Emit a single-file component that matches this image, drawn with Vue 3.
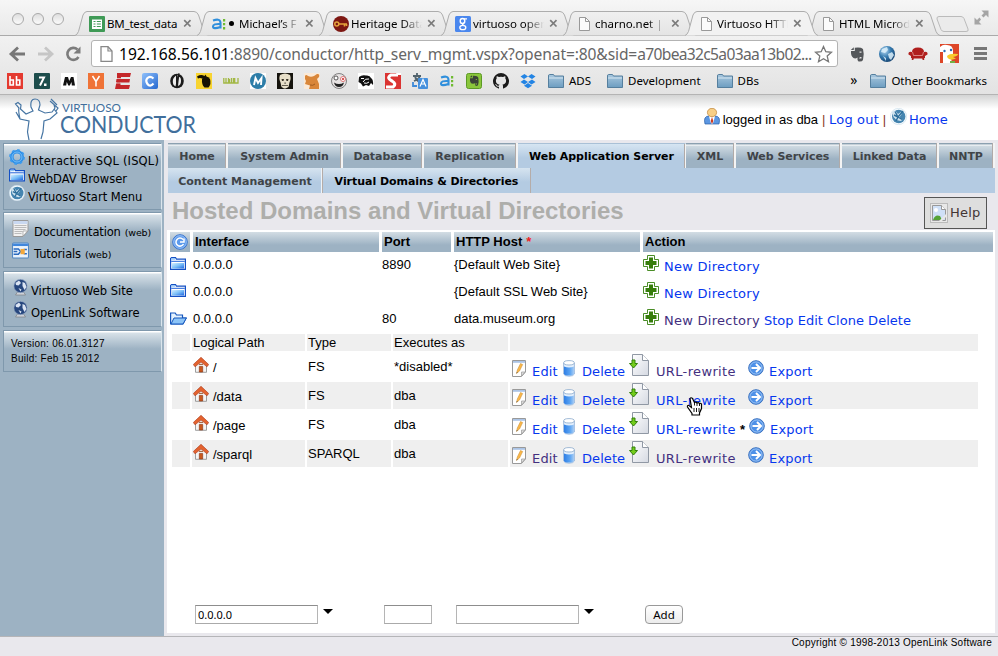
<script setup>
const tabs = [
  { icon: 'sheet', title: 'BM_test_data' },
  { icon: 'ai', title: '● Michael’s F', dot: true },
  { icon: 'key', title: 'Heritage Data' },
  { icon: 'google', title: 'virtuoso open' },
  { icon: 'doc', title: 'charno.net | c' },
  { icon: 'doc', title: 'Virtuoso HTTP', active: true },
  { icon: 'doc', title: 'HTML Microd' },
]
const marks = ['bb', 'slash', 'm', 'y', 'e', 'c', 'quill', 'fruit', 'wu', 'mm', 'skull', 'beast', 'face', 'hat', 's', 'trans', 'ai', 'evernote', 'github', 'dropbox']
const folders = ['ADS', 'Development', 'DBs']
const nav = [
  ['Home', 60], ['System Admin', 115], ['Database', 81], ['Replication', 94], ['Web Application Server', 168],
  ['XML', 50], ['Web Services', 106], ['Linked Data', 97], ['NNTP', 56],
]
const hosts = [
  { port: '8890', host: '{Default Web Site}' },
  { port: '', host: '{Default SSL Web Site}' },
  { port: '80', host: 'data.museum.org', open: true },
]
const paths = [
  { path: '/', type: 'FS', user: '*disabled*', rewriteSeen: true },
  { path: '/data', type: 'FS', user: 'dba' },
  { path: '/page', type: 'FS', user: 'dba', star: true },
  { path: '/sparql', type: 'SPARQL', user: 'dba', editSeen: true, rewriteSeen: true },
]
</script>

<template>
  <svg class="defs" width="0" height="0" aria-hidden="true">
    <defs>
      <linearGradient id="gFold" x1="0" y1="0" x2="0" y2="1"><stop offset="0" stop-color="#a9c8df" /><stop offset="1" stop-color="#6d9dc0" /></linearGradient>
      <linearGradient id="gBlue" x1="0" y1="0" x2="1" y2="1"><stop offset="0" stop-color="#8fc0fb" /><stop offset="1" stop-color="#2467cf" /></linearGradient>
      <linearGradient id="gFront" x1="0" y1="0" x2="1" y2="1"><stop offset="0" stop-color="#d4eeff" /><stop offset=".5" stop-color="#7cc0f8" /><stop offset="1" stop-color="#1e66e0" /></linearGradient>
      <linearGradient id="gDb" x1="0" y1="0" x2="1" y2="0"><stop offset="0" stop-color="#2f7fe6" /><stop offset=".6" stop-color="#5ba4f2" /><stop offset="1" stop-color="#a9cdf5" /></linearGradient>
      <linearGradient id="gPage" x1="0" y1="0" x2="1" y2="1"><stop offset="0" stop-color="#fff" /><stop offset="1" stop-color="#d5d9e2" /></linearGradient>
      <linearGradient id="gTab" x1="0" y1="0" x2="0" y2="1"><stop offset="0" stop-color="#f0f0f0" /><stop offset="1" stop-color="#e4e4e4" /></linearGradient>
      <radialGradient id="gGlobe" cx=".35" cy=".3" r=".8"><stop offset="0" stop-color="#b8dcf5" /><stop offset=".5" stop-color="#3479ae" /><stop offset="1" stop-color="#123c68" /></radialGradient>
    </defs>
    <symbol id="sheet" viewBox="0 0 16 16"><rect width="16" height="16" rx="1" fill="#3f9a56" /><path d="M3 3.500h10v9.500H3z" fill="#fff" /><path d="M4.500 5h2v1h-2zM4.500 7.500h2v1h-2zM4.500 10h2v1h-2zM7.800 5h4v1h-4zM7.800 7.500h4v1h-4zM7.800 10h4v1h-4z" fill="#3f9a56" /></symbol>
    <symbol id="ai" viewBox="0 0 16 16"><path d="M2 4.500Q9.500 2 9.500 7V12.500M9.500 8Q2 7.500 2 10.500T9.500 11" fill="none" stroke="#2f8fdc" stroke-width="2.100" /><path d="M12 3h2.200v2.500H12zM12 7h2.200v2.300H12zM12 11h2.200v2.500H12z" fill="#6fbb32" /></symbol>
    <symbol id="key" viewBox="0 0 16 16"><circle cx="8" cy="8" r="8" fill="#7d1712" /><path d="M5 8h9M11.500 8v2.500M13.500 8v2" stroke="#e5a33b" stroke-width="1.600" /><circle cx="3.800" cy="8" r="2" fill="none" stroke="#e5a33b" stroke-width="1.500" /></symbol>
    <symbol id="google" viewBox="0 0 16 16"><rect width="16" height="16" rx="1.500" fill="#4a87ee" /><ellipse cx="7.500" cy="5" rx="2.300" ry="2.500" fill="none" stroke="#fff" stroke-width="1.400" /><path d="M9 2.800h3M9 7Q6 8 9 9.500" fill="none" stroke="#fff" stroke-width="1.300" /><ellipse cx="7.800" cy="11.500" rx="3" ry="2.200" fill="none" stroke="#fff" stroke-width="1.300" /></symbol>
    <symbol id="doc" viewBox="0 0 16 16"><path d="M2.500 1.500h6l4 4v9h-10z" fill="#fbfbfb" stroke="#999" /><path d="M8.500 1.500v4h4" fill="none" stroke="#999" /></symbol>
    <symbol id="bb" viewBox="0 0 16 16"><rect width="16" height="16" fill="#e43a30" /><path d="M3 3v9h3.300V7H3M9.500 3v9h3.300V7H9.500" fill="none" stroke="#fff" stroke-width="1.600" /></symbol>
    <symbol id="slash" viewBox="0 0 16 16"><rect width="16" height="16" rx="1" fill="#1d4d4c" /><path d="M5 4.500h5L6 12.500" fill="none" stroke="#fff" stroke-width="2" /><path d="M10 10.500h2.500V13H10z" fill="#fff" /></symbol>
    <symbol id="m" viewBox="0 0 16 16"><rect width="16" height="16" fill="#fff" /><path d="M2 12.500 4 4h3l1.200 4L10 4h2.500L14 12.500h-3.200L10.500 9l-1.700 3.500H7.300L5.800 9l-.6 3.500z" fill="#111" /></symbol>
    <symbol id="y" viewBox="0 0 16 16"><rect width="16" height="16" fill="#ef7337" /><path d="m4.500 3 3.500 5.500L11.500 3M8 8v5.500" fill="none" stroke="#fff" stroke-width="1.500" /></symbol>
    <symbol id="e" viewBox="0 0 16 16"><path d="M2 0h14l-1 4H6v2h9l-.6 3.500H5.500V12H15l-1 4H0L1.500 9H1l.5-3H2z" fill="#c4272a" /><path d="M0 5.500h6M0 10h6" stroke="#eee" stroke-width=".700" /></symbol>
    <symbol id="c" viewBox="0 0 16 16"><rect width="16" height="16" rx="2" fill="url(#gBlue)" /><path d="M11.500 5.500Q8 2.500 5.500 5T5.500 11T11.500 10.500" fill="none" stroke="#fff" stroke-width="2.200" /></symbol>
    <symbol id="quill" viewBox="0 0 16 16"><ellipse cx="8" cy="8" rx="6.800" ry="7.300" fill="#1b1b1b" /><path d="M8.500 1.800Q4 4 3.800 8t2.700 5.500L7.500 8zM10 4l-1 9q3-1 3-5t-2-4" fill="#eee" /><path d="M10 0 7 15M7.500 2v11" stroke="#1b1b1b" /></symbol>
    <symbol id="fruit" viewBox="0 0 16 16"><rect width="16" height="16" fill="#f8d431" /><path d="M6 6q4-2 8 0 1.500 5-1.500 8.500h-4Q5.500 12 6 6" fill="#171303" /><path d="M1 3.500q4-2.500 7.500-.5l1-1.500 1 2 3.500 1.500-2 1.500-5-.5q-3-1.500-5-.5z" fill="#171303" /></symbol>
    <symbol id="wu" viewBox="0 0 16 16"><path d="M.8 5v5h4.700V5M3 5v5M6.500 6v4h4V5M8.500 5v5M11 10h4V5M11.700 5v5" fill="none" stroke="#a2b844" stroke-width="1.300" /></symbol>
    <symbol id="mm" viewBox="0 0 16 16"><rect width="16" height="16" fill="#fff" /><circle cx="8" cy="8" r="8" fill="#2d7da8" /><path d="M4 12 5.500 5l2.500 5 3.500-5-.5 7" fill="none" stroke="#fff" stroke-width="1.900" /></symbol>
    <symbol id="skull" viewBox="0 0 16 16"><rect width="16" height="16" fill="#15130d" /><path d="M3 2q5-3 10 0 1.500 4-.5 7.500L11.500 14l-3 1.500H7L4.500 14l-1-4.500Q1.500 6 3 2" fill="#e6dec8" /><path d="M4.500 6H7L6.500 8H5zM9 6h2.500L11 8H9.500zM7.500 9.500h1.200v1.200H7.500zM5 12h6v.800H5z" fill="#3a3428" /></symbol>
    <symbol id="beast" viewBox="0 0 16 16"><rect width="16" height="16" fill="#fbe9d6" /><path d="M1 3q1-2 3 0 3 1.500 6 0l3-2q3-.5 2 3l-2 2 2 5v5H5l1-3.500-5-1.500L2 8 1 6z" fill="#d98639" /><path d="M6 12q3 1 5-1" stroke="#a05c20" fill="none" /></symbol>
    <symbol id="face" viewBox="0 0 16 16"><circle cx="8" cy="8" r="7.500" fill="#e7e3e3" stroke="#666" stroke-width=".8" /><circle cx="5" cy="5" r="2" fill="#fff" stroke="#333" stroke-width=".8" /><circle cx="12" cy="6" r="2.500" fill="#fff" stroke="#d77" /><circle cx="12" cy="6" r="1" fill="#c22" /><path d="M3 9.500q5 3 10 0-1 4.500-5 4.500t-5-4.500" fill="#222" /></symbol>
    <symbol id="hat" viewBox="0 0 16 16"><rect width="16" height="16" fill="#fff" /><path d="M1 4q3-2.500 7-1.500 4-.5 5 2.500 2.500 1.500 2 7l-2-2-2 3-3-1-3 1.500-2-3L.500 9z" fill="#111" /><path d="M3 5.500h3M5 9q2-4 6-3M6 10q3 1 5-1" stroke="#fff" fill="none" stroke-width="1" /></symbol>
    <symbol id="s" viewBox="0 0 16 16"><rect width="16" height="16" fill="#db3432" /><path d="M13 2H6Q1 5 7 8q5 3 1 6H1" fill="none" stroke="#fff" stroke-width="3.200" /><path d="M11 0h5v2h-4z" fill="#fff" /></symbol>
    <symbol id="trans" viewBox="0 0 16 16"><path d="M1 3h8M5 0v3M2 8q5-2 6-5M3 4q2 4 5 5" stroke="#52636d" stroke-width="1.800" fill="none" /><rect x="6" y="5" width="10" height="11" rx="1" fill="#4590dd" /><path d="m8 13.500 3-7 3 7M9 11h4" fill="none" stroke="#fff" stroke-width="1.200" /><path d="M1 9v4h4" fill="none" stroke="#3c89d8" stroke-width="1.800" /></symbol>
    <symbol id="evernote" viewBox="0 0 16 16"><rect x=".5" y=".5" width="15" height="15" rx="2" fill="#8ac63c" stroke="#5c9a25" /><path d="M4 5.200h2.800V2.800q5-.3 5.500 2 .8 4-.3 7.500-2.500 1.500-3-.5v-1.500q-2 .7-4 0Q3.500 8.500 4 5.200" fill="#3b4438" /><path d="m3.800 4.300 2.200-2.100v2.100z" fill="#3b4438" /><path d="M9.800 6h1v1h-1zM9.500 10.500h1.500v1H9.500z" fill="#8ac63c" /></symbol>
    <symbol id="elephant" viewBox="0 0 16 16"><path d="M2 5h3.800V1.800q6-.8 8.200 1.200 1.500 5 0 11-1 2-4.500 1.500-1.500-1-1-4-2 1.500-4 .5Q1.500 10 2 5M1.800 4l3-2.800V4z" fill="#54575a" /><path d="M10.500 5.500h2v1.200h-2zM10 12.500h2.500v-1.500H11z" fill="#e0e0e0" /></symbol>
    <symbol id="github" viewBox="0 0 16 16"><path d="M8 0a8 8 0 0 0-2.500 15.600c.4.100.5-.2.500-.400v-1.500c-2.200.5-2.700-.9-2.700-.9-.4-.9-.9-1.200-.9-1.200-.7-.5.1-.5.1-.5.800.1 1.200.8 1.200.8.7 1.200 1.900.9 2.300.7.1-.5.300-.9.500-1.100-1.800-.2-3.600-.9-3.600-4 0-.9.300-1.600.8-2.100 0-.3-.4-1.100.1-2.200 0 0 .7-.2 2.200.8a7.500 7.500 0 0 1 4 0c1.500-1 2.200-.8 2.200-.8.400 1.100.1 1.900.1 2.200.5.500.8 1.200.8 2.100 0 3.100-1.900 3.800-3.700 4 .3.300.6.800.6 1.500v2.200c0 .2.100.5.500.4A8 8 0 0 0 8 0" fill="#1b1b1b" /></symbol>
    <symbol id="dropbox" viewBox="0 0 16 16"><path d="m4.500 1 3.500 2.500L4 6 .500 3.500zM11.500 1 8 3.500 12 6l3.500-2.500zM4 6.500 8 9l-3.500 2.500L.500 9zM12 6.500 8 9l3.500 2.500L15.500 9zM8 10l4 2.800-4 2.500-4-2.500z" fill="#2384e4" /></symbol>
    <symbol id="folder" viewBox="0 0 16 14"><path d="M.5 13.500V2q0-1.500 1-1.500h4l1 1.500h9v11.500z" fill="url(#gFold)" stroke="#557f9e" /><path d="M1 4h14" stroke="#d6e7f2" /></symbol>
    <symbol id="globe" viewBox="0 0 16 16"><circle cx="8" cy="8" r="8" fill="url(#gGlobe)" /><path d="m3 3 5-2 1 3-3 3-4-1zM9 8l4-2 2 3-3 5-2-2zM4 10l3 2v3z" fill="#dcf0fa" opacity=".85" /></symbol>
    <symbol id="couch" viewBox="0 0 20 16"><path d="M4 6q0-4.500 6-4.500T16 6q4-1 3.500 2.500L17 10v2h-.8v2h-1.500l-.5-1.500H5.800L5.300 14H3.800v-2H3v-2L.500 8.500Q0 5 4 6" fill="#b01f1d" /><path d="M4.500 6l1 3.500h9l1-3.500" fill="none" stroke="#e6a09c" stroke-width=".8" /></symbol>
    <symbol id="duck" viewBox="0 0 19 19"><rect width="19" height="19" fill="#dd4628" /><path d="M0 3q3-3 7-2 6 0 6 6v4l-2 3 1 5H3V8H0z" fill="#fff" /><circle cx="4.500" cy="7" r="1.200" fill="#2b6bb5" /><circle cx="11" cy="6" r="1.200" fill="#2b6bb5" /><path d="M7 12q3-3 11-2 0 2-5 3l3 1.500q-4 2-7 .5-2-1-2-3" fill="#f8ca2d" /><path d="M10 17h5v2h-5z" fill="#74b043" /></symbol>
    <symbol id="gear" viewBox="0 0 16 16"><circle cx="8" cy="8" r="5.200" fill="none" stroke="#2f8fe6" stroke-width="3.600" /><circle cx="8" cy="8" r="7" fill="none" stroke="#3c9bee" stroke-width="1.800" stroke-dasharray="2.700 2.800" /><circle cx="8" cy="8" r="5" fill="none" stroke="#74bdf8" /></symbol>
    <symbol id="wfold" viewBox="0 0 16 13"><path d="M.600 12.400V1.500l1-.9h3.900l1 1.500h8.900v10.300z" fill="#fff" stroke="#1450c4" stroke-width="1.200" /><path d="M1.200 1.200h4v1.500h-4z" fill="#8cc3f8" /><path d="M1.200 3.800h13.600v1H1.200z" fill="#1c5fd8" /><path d="M2 6h12v5.500H2z" fill="url(#gFront)" /></symbol>
    <symbol id="wopen" viewBox="0 0 17 13"><path d="M.600 12V1h4.600l1.300 2h6v3H16L13 12z" fill="#e4f2fe" stroke="#1556bd" stroke-width="1.200" /><path d="M4 6h12.400L13 12H1z" fill="#8cc4f7" stroke="#1556bd" /></symbol>
    <symbol id="start" viewBox="0 0 17 17"><circle cx="8.500" cy="8.500" r="8.200" fill="#f5fafd" stroke="#c9dde9" stroke-width=".6" /><circle cx="8.700" cy="8.500" r="6.700" fill="#4585b0" /><path d="m2 4 3-1.500 3 3.500 3-2 .5 2.500-2 2.500 3 3-2 1-4-1-3-3z" fill="#cfe3ef" /><path d="M5 3.500 8 9l5-6M8 9l4 2.500M4 7l4 2-2 4" fill="none" stroke="#2d6f9c" stroke-width="1.400" /></symbol>
    <symbol id="docs" viewBox="0 0 16 17"><path d="M.5.500h15V11l-5 5.500H.500z" fill="#f1f1f1" stroke="#999" /><path d="M1 1h14v3H1z" fill="#c9d8f0" /><path d="M2 5.500h12M2 7.500h12M2 9.500h11M2 11.500h8M2 13.500h7" stroke="#bbb" /><path d="M10.500 16V11H15z" fill="#fff" stroke="#999" stroke-width=".7" /></symbol>
    <symbol id="tut" viewBox="0 0 16 15"><rect x=".5" y=".5" width="15" height="14" rx="1" fill="#eaf3fc" stroke="#4f86c2" /><path d="M1 1h14v2.300H1z" fill="#3f86dc" /><path d="M1.500 6h4.500l2 2.500-2 2.500H1.500M5 8.500H1.500M11 6.500h3M11 10.500h3" fill="none" stroke="#2a6abf" stroke-width="1.400" /><path d="M8 6h4v5H8z" fill="#f3a83c" /></symbol>
    <symbol id="web" viewBox="0 0 14 17"><path d="M4 13h6l2 3H2z" fill="#ccd1d9" stroke="#777" stroke-width=".6" /><circle cx="7" cy="7" r="6.700" fill="#27477e" stroke="#9fb2cc" stroke-width=".7" /><path d="m2 4 3.500-2.500L7.500 4 5 6.500 2.500 6zM9 3l2.500 1L13 8l-2 3-2-4zM5 9l3 1.500-1 2z" fill="#dbe4f2" /></symbol>
    <symbol id="user" viewBox="0 0 16 17"><path d="M1 16q-2-8 4-8h6q6 0 4 8z" fill="#5c97e2" stroke="#2a5ea8" stroke-width=".7" /><path d="M5 8h6l-1.500 6L8 16.300 6.500 14z" fill="#fff" /><path d="m8 9 1.300 4L8 16l-1.300-3z" fill="#ce3a20" /><ellipse cx="8" cy="4.500" rx="4.600" ry="4.200" fill="#f8cf86" stroke="#bb8135" stroke-width=".7" /></symbol>
    <symbol id="refresh" viewBox="0 0 16 16"><circle cx="8" cy="8" r="7.300" fill="#5c9aec" stroke="#3a74cd" /><circle cx="8" cy="8" r="6.300" fill="none" stroke="#a5c8f6" stroke-width=".8" /><path d="M11 5.500A4 4 0 1 0 11.500 10M8 8h4V4.500" fill="none" stroke="#fff" stroke-width="1.500" /></symbol>
    <symbol id="plus" viewBox="0 0 16 16"><path d="M4.500.500h7v4h4v7h-4v4h-7v-4h-4v-7h4z" fill="#fff" stroke="#4a8d26" /><path d="M6 2.500h4V6h3.500v4H10v3.500H6V10H2.500V6H6z" fill="#377d0c" /></symbol>
    <symbol id="house" viewBox="0 0 16 16"><path d="M2.500 8v7.300h11V8L8 3z" fill="#f5f5f5" stroke="#888" stroke-width=".8" /><path d="M6.300 9.500h3.400V15H6.300z" fill="#c9571c" stroke="#873313" stroke-width=".6" /><path d="m8 .3 7.700 7.200-1.700 2.300L8 5 2 9.800.300 7.500z" fill="#e3632f" stroke="#a9371b" stroke-width=".6" /><path d="M6 6.800h4v1.300H6z" fill="#a36b4b" /></symbol>
    <symbol id="note" viewBox="0 0 14 17"><path d="M.5.500h13V12l-4 4.500h-9z" fill="#fff" stroke="#999" /><path d="M1 1h12v1.800H1z" fill="#abc4e6" /><path d="m4.500 13.500.8-3.500 3.200-6.500 2.200 1L7.500 11z" fill="#fbb748" stroke="#c38a35" stroke-width=".5" /><path d="m4.500 13.500.3-1.500.9.500z" fill="#444" /><path d="M9.500 16v-4H13z" fill="#ddd" stroke="#999" stroke-width=".7" /></symbol>
    <symbol id="db" viewBox="0 0 12 17"><path d="M.6 3v11q1 2.200 5.400 2.200T11.400 14V3z" fill="#e3effc" stroke="#8faed6" stroke-width=".8" /><path d="M1 6.500q5 1.800 10 0V14q-1 1.600-5 1.600T1 14z" fill="url(#gDb)" /><ellipse cx="6" cy="2.800" rx="5.300" ry="2.200" fill="#fff" stroke="#8aaacc" stroke-width=".8" /></symbol>
    <symbol id="rewrite" viewBox="0 0 20 22"><path d="M3.500.500h10l6 6v15h-16z" fill="url(#gPage)" stroke="#9098a4" /><path d="M13.500.500v6h6" fill="#fff" stroke="#9098a4" /><path d="M3 6h3v3.500h2.500L4.500 14 .500 9.500H3z" fill="#74cd1b" stroke="#33800c" /></symbol>
    <symbol id="export" viewBox="0 0 16 16"><circle cx="8" cy="8" r="7.300" fill="#4e91e8" stroke="#3e73bf" /><circle cx="8" cy="8" r="6.100" fill="none" stroke="#a9cbf5" stroke-width=".8" /><path d="M3.500 8h8M8 4l4 4-4 4" fill="none" stroke="#fff" stroke-width="2" /></symbol>
    <symbol id="broken" viewBox="0 0 18 20"><rect x=".5" y=".5" width="17" height="19" fill="#e8e8e8" stroke="#bbb" /><path d="M2.500 2.500h9l4 4v11h-13z" fill="#cfe0f7" stroke="#999" /><path d="M11.500 2.500v4h4" fill="#fff" stroke="#999" /><circle cx="6" cy="7" r="2" fill="#fff" /><path d="M3 17q2-6 7-4l2 4z" fill="#55a336" /><path d="m9 18 7-7v3l-4 4z" fill="#e8e8e8" /></symbol>
  </svg>

  <div class="window">
    <header class="chrome">
      <div class="strip">
        <div class="lights"><i /><i /><i /></div>
        <div v-for="t in tabs" :key="t.title" class="tab" :class="{ active: t.active }">
          <svg class="shape" width="136" height="25" viewBox="0 0 136 25">
            <path class="fill" d="M0 24.500Q2 24 3.500 20.500L8 4Q9.500.500 12 .500H119Q122 .500 123.500 4L129 20.500Q130.500 24 133 24.500" />
          </svg>
          <svg class="fav"><use :href="'#' + t.icon" /></svg>
          <span class="ttl"><template v-if="t.dot"><b class="bullet" />Michael’s F</template><template v-else>{{ t.title }}</template></span>
          <svg class="close" width="9" height="9" viewBox="0 0 9 9"><path d="m1.200 1.200 6.300 6.300M7.500 1.200 1.200 7.500" stroke="#7b7b7b" stroke-width="1.700" /></svg>
        </div>
        <svg class="newtab" width="34" height="17" viewBox="0 0 34 17"><path d="M3 .500H25Q27 .500 28 2.500L32 13Q33 15.500 30 15.500H8Q6 15.500 5 13.500L1 3Q.500.500 3 .500" fill="#ebebeb" stroke="#bbb" /></svg>
        <svg class="full" width="15" height="15" viewBox="0 0 15 15"><path d="M7.500.500H14.500V7.500L12 5 9.500 7.500 7.500 5.500 10 3zM.500 7.500V14.500H7.500L5 12 7 9.500 5.500 7.500 3 10z" fill="#a5a5a5" /></svg>
      </div>
      <div class="toolbar">
        <svg width="84" height="20" viewBox="0 0 84 20" class="navs">
          <path d="M19 10H6M12 3.500 5 10l7 6.500" fill="none" stroke="#777" stroke-width="2.800" />
          <path d="M32 10H45M39 3.500 46 10l-7 6.500" fill="none" stroke="#c6c6c6" stroke-width="2.800" />
          <path d="M71.500 5.500A6 6 0 1 0 72.500 13" fill="none" stroke="#7c7c7c" stroke-width="2.600" /><path d="M74.500 2.500V9.500H67.500z" fill="#7c7c7c" />
        </svg>
        <div class="url">
          <svg class="pageicon" width="13" height="16" viewBox="0 0 13 16"><path d="M1 .700h7l4 4.300v10.300H1z" fill="#fff" stroke="#888" stroke-width="1.300" /><path d="M8 .700V5h4" fill="none" stroke="#888" stroke-width="1.200" /></svg>
          <span class="addr"><b>192.168.56.101</b>:8890/conductor/http_serv_mgmt.vspx?openat=:80&amp;sid=<span class="sid">a70bea32c5a03aa13b02...</span></span>
          <svg class="star" width="19" height="18" viewBox="0 0 19 18"><path d="m9.500 1.500 2.300 5.200 5.700.6-4.300 3.800 1.300 5.600-5-3-5 3 1.300-5.600L1.500 7.300l5.700-.6z" fill="#fff" stroke="#777" stroke-width="1.300" /></svg>
        </div>
        <svg class="ext e1"><use href="#elephant" /></svg>
        <svg class="ext e2"><use href="#globe" /></svg>
        <svg class="ext e3"><use href="#couch" /></svg>
        <svg class="ext e4"><use href="#duck" /></svg>
        <div class="burger"><i /><i /><i /></div>
      </div>
      <div class="bookmarks">
        <svg v-for="m in marks" :key="m" class="bm"><use :href="'#' + m" /></svg>
        <div v-for="f in folders" :key="f" class="fold"><svg><use href="#folder" /></svg><span>{{ f }}</span></div>
        <span class="more">»</span>
        <div class="fold other"><svg><use href="#folder" /></svg><span>Other Bookmarks</span></div>
      </div>
    </header>

    <div class="banner">
      <svg class="logo" width="200" height="44" viewBox="0 0 200 44">
        <path d="M29 44 27.500 36 29 25 20 23 16 16M20 23Q18 14 19 12L15.500 8 18 6.500 21 9 20.500 13 26 18 33 15 31 11Q30 3 35 3T40 9L38.500 14 45 17 52 16 55 12 54 9M50 5 58 12 56 15M51 3 57 9M54 13 57 17 50 23 44 25 43 36 41 43" fill="none" stroke="#4675a3" stroke-width="1.200" />
        <text x="62" y="16" textLength="59" lengthAdjust="spacingAndGlyphs" class="l1">VIRTUOSO</text>
        <text x="60" y="36.500" textLength="136" lengthAdjust="spacingAndGlyphs" class="l2">CONDUCTOR</text>
      </svg>
      <div class="login">
        <svg class="usericon"><use href="#user" /></svg><span class="who">logged in as dba</span><span class="bar">|</span><a>Log out</a><span class="bar">|</span><svg class="homeicon"><use href="#start" /></svg><a>Home</a>
      </div>
    </div>

    <div class="body">
      <aside>
        <section class="b1">
          <p class="wide"><svg><use href="#gear" /></svg>Interactive SQL (ISQL)</p>
          <p><svg><use href="#wfold" /></svg>WebDAV Browser</p>
          <p><svg><use href="#start" /></svg>Virtuoso Start Menu</p>
        </section>
        <section class="b2">
          <p><svg><use href="#docs" /></svg>Documentation <small>(web)</small></p>
          <p><svg><use href="#tut" /></svg>Tutorials <small>(web)</small></p>
        </section>
        <section class="b3">
          <p><svg><use href="#web" /></svg>Virtuoso Web Site</p>
          <p><svg><use href="#web" /></svg>OpenLink Software</p>
        </section>
        <section class="b4">
          <p>Version: 06.01.3127</p>
          <p>Build: Feb 15 2012</p>
        </section>
      </aside>
      <main>
        <nav class="tabs">
          <a v-for="n in nav" :key="n[0]" :class="{ on: n[1] === 168 }" :style="{ width: n[1] + 'px' }">{{ n[0] }}</a>
        </nav>
        <nav class="sub"><a class="s1">Content Management</a><a class="s2">Virtual Domains &amp; Directories</a></nav>
        <div class="title"><h1>Hosted Domains and Virtual Directories</h1><button class="help"><svg width="18" height="20"><use href="#broken" /></svg>Help</button></div>
        <div class="panel">
          <div class="grid head">
            <span class="ref"><svg><use href="#refresh" /></svg></span><span>Interface</span><span>Port</span><span>HTTP Host <em>*</em></span><span>Action</span>
          </div>
          <div class="hosts">
            <div v-for="h in hosts" :key="h.host" class="grid host">
              <svg :class="{ open: h.open }"><use :href="h.open ? '#wopen' : '#wfold'" /></svg>
              <span>0.0.0.0</span><span>{{ h.port }}</span><span>{{ h.host }}</span>
              <div class="act"><svg><use href="#plus" /></svg><a class="new" :class="{ seen: h.open }">New Directory</a><template v-if="h.open"><a>Stop</a><a>Edit</a><a>Clone</a><a>Delete</a></template></div>
            </div>
          </div>
          <div class="inner">
            <div class="row top"><span /><span>Logical Path</span><span>Type</span><span>Executes as</span><span /></div>
            <div v-for="p in paths" :key="p.path" class="row">
              <span /><span class="path"><svg><use href="#house" /></svg>{{ p.path }}</span><span>{{ p.type }}</span><span>{{ p.user }}</span>
              <div class="ops">
                <svg class="i-note"><use href="#note" /></svg><a class="a-edit" :class="{ seen: p.editSeen }">Edit</a>
                <svg class="i-db"><use href="#db" /></svg><a class="a-del">Delete</a>
                <svg class="i-rw"><use href="#rewrite" /></svg><a class="a-rw" :class="{ seen: p.rewriteSeen }">URL-rewrite</a>
                <span class="gap" :class="{ wide: p.star }">{{ p.star ? '*' : '' }}</span>
                <svg class="i-ex"><use href="#export" /></svg><a>Export</a>
              </div>
            </div>
          </div>
          <div class="form">
            <input class="f1" value="0.0.0.0"><i class="caret" /><input class="f2"><input class="f3"><i class="caret" /><button>Add</button>
          </div>
        </div>
      </main>
    </div>
    <footer>Copyright © 1998-2013 OpenLink Software</footer>
    <svg class="cursor" width="17" height="19" viewBox="0 0 17 19"><path d="M5.500 10.500 3 8.500Q1 8 1.500 10L6 16.500V18H13.500V16L15.500 11.500V7Q14.500 5.500 13.500 7 13 5 11 6 10 4.500 8.500 5.500L6.500 1.500Q5 0 4 1.500z" fill="#fff" stroke="#000" stroke-width="1.200" /><path d="M8 11v4M10.500 11v4M13 11v4M8.500 5.500v3M11 6v3M13.500 7v2" stroke="#000" stroke-width=".9" /></svg>
  </div>
</template>

<style>
body { margin: 0; background: #e9e8ed; overflow: hidden; }
</style>

<style scoped>
* { box-sizing: border-box; }
p, h1 { margin: 0; }
svg { display: block; flex: none; }
.defs { position: absolute; }
.window { width: 998px; height: 656px; font: 13px "Liberation Sans", sans-serif; color: #000; position: relative; overflow: hidden; display: flex; flex-direction: column; }
.chrome { height: 95px; flex: none; border-bottom: 1px solid #b4b4b4; background: linear-gradient(#f6f6f6, #e9e9e9 35px, #f1f1f1 36px, #e3e3e3); font-family: "Noto Sans", sans-serif; }
.strip { height: 36px; padding-top: 11px; display: flex; position: relative; box-shadow: inset 0 -1px #aaa; }
.lights { width: 75px; display: flex; gap: 8px; padding: 2px 0 0 12px; flex: none; }
.lights i { width: 12px; height: 12px; border-radius: 50%; border: 1px solid #a9a9a9; background: linear-gradient(#dedede, #fbfbfb); }
.tab { width: 122px; height: 25px; flex: none; display: flex; position: relative; padding-left: 14px; align-items: center; }
.tab .shape { position: absolute; left: 0; top: 0; }
.tab .fill { fill: url(#gTab); stroke: #adadad; }
.tab.active { z-index: 2; }
.tab.active .fill { fill: #f2f2f2; }
.fav { width: 16px; height: 16px; position: relative; }
.ttl { position: relative; margin-left: 2px; width: 72px; overflow: hidden; white-space: nowrap; font-size: 11.5px; letter-spacing: -0.05px; line-height: 18px; -webkit-mask: linear-gradient(90deg, #000 52px, transparent 71px); }
.tab:nth-child(2) .ttl { -webkit-mask: none; letter-spacing: -0.2px; }
.bullet { display: inline-block; width: 5px; height: 5px; border-radius: 50%; background: #000; margin: 0 5px 2px 0; }
.close { margin-left: 4px; position: relative; }
.newtab { margin: 5px 0 0 7px; }
.full { position: absolute; left: 974px; top: 10px; }
.toolbar { height: 35px; display: flex; align-items: center; position: relative; padding-left: 6px; }
.navs { margin-right: 1px; }
.url { width: 747px; height: 27px; border: 1px solid #b3b3b3; border-radius: 3px; background: #fff; display: flex; align-items: center; }
.pageicon { margin-left: 8px; }
.addr { width: 697px; flex: none; white-space: nowrap; font-size: 15.6px; letter-spacing: -.12px; margin-left: 6px; color: #666; }
.addr b { font-weight: 400; letter-spacing: 0; color: #000; }
.addr .sid { letter-spacing: -.68px; }
.star { margin-left: -2px; }
.ext { width: 16px; height: 16px; }
.e1 { margin-left: 11px; }
.e2 { margin-left: 14px; }
.e3 { width: 20px; margin-left: 13px; }
.e4 { width: 19px; height: 19px; margin-left: 12px; }
.burger { display: flex; flex-direction: column; gap: 2px; margin-left: 15px; }
.burger i { width: 13px; height: 3px; background: #777; }
.bookmarks { height: 20px; display: flex; align-items: center; padding-left: 7px; }
.bm { width: 16px; height: 16px; margin-right: 11px; }
.fold { display: flex; align-items: center; font-size: 11.5px; line-height: 14px; white-space: nowrap; }
.fold svg { width: 16px; height: 14px; margin-left: 1px; }
.fold span { margin: -1px 15px 0 5px; }
.more { margin: 0 12px 3px auto; font-size: 14px; }
.fold.other span { margin-right: 11px; }
.banner { height: 45px; flex: none; background: linear-gradient(#d3d4d4, #fff 14px); display: flex; justify-content: space-between; }
.logo { margin-top: 1px; }
.l1 { font: 11.500px Lato, sans-serif; fill: #416f9c; }
.l2 { font: 24px Lato, sans-serif; fill: #416f9c; }
.login { display: flex; align-items: center; padding: 4px 50px 0 0; height: 45px; }
.login svg { margin-bottom: 7px; }
.usericon { width: 16px; height: 17px; margin-right: 3px; }
.homeicon { width: 17px; height: 17px; margin: 0 2px 0 0; }
.bar { width: 11px; text-align: center; color: #8a3520; }
a { font: 13px "DejaVu Sans", sans-serif; letter-spacing: .17px; color: #0637ee; white-space: nowrap; }
a.seen { color: #43307f; }
.body { height: 496px; flex: none; display: flex; }
aside { width: 164px; background: #9db2c3; padding: 3px 2px 0 3px; display: flex; flex-direction: column; gap: 3px; flex: none; }
section { border: 1px solid #7f98ac; border-right-color: #dbe5ec; background: linear-gradient(#fff 1px, #d7e1e8 2px, #9db2c3 18px); font: 11.5px "DejaVu Sans", sans-serif; letter-spacing: 0; white-space: nowrap; }
section p { display: flex; align-items: center; }
.b1 { height: 67px; padding: 8px 0 0 5px; }
.b1 p { height: 18px; }
.b1 p.wide { letter-spacing: .18px; }
.b1 p svg { width: 16px; height: 16px; margin: -8px 3px 0 0; }
.b2 { height: 56px; padding: 8px 0 0 8px; margin-top: -1px; }
.b2 p { height: 22px; letter-spacing: -.15px; }
.b2 p svg { width: 17px; height: 17px; margin: -7px 5px 0 0; }
.b2 small { font-size: 9.500px; margin-left: 4px; padding-top: 1px; }
.b3 { height: 56px; padding: 8px 0 0 9px; }
.b3 p { height: 22px; }
.b3 p svg { width: 15px; height: 17px; margin: -7px 3px 0 0; }
.b4 { height: 42px; padding: 5px 0 0 7px; font: 10px "Liberation Sans", sans-serif; letter-spacing: .25px; }
.b4 p { height: 15px; }
main { padding: 3px; width: 834px; background: #e9e8ed; }
.tabs { height: 25px; display: flex; padding-left: 1px; }
.tabs a, .sub a { font: bold 11px "DejaVu Sans", sans-serif; letter-spacing: -.04px; color: #3f4448; text-align: center; }
.tabs a { line-height: 27px; background: linear-gradient(#8ba0b0 1px, #fff 2px, #cfdae2 3px, #9db2c3 16px); border-right: 2px solid #f4f4f4; box-shadow: inset -1px 0 #b0aaa8; }
.tabs a.on { line-height: 25px; background: linear-gradient(#d6e5f2, #b4cbe2 14px); color: #000; border-top: 1px solid #a9c0d6; border-right-width: 1px; }
.sub { height: 25px; display: flex; background: #b4cbe2; margin: 0 0 0 1px; }
.sub a { line-height: 27px; background: linear-gradient(#d6e4f0, #b4cbe2 14px); border-right: 1px solid #b5aca8; box-shadow: inset -1px 0 #eef3f8; }
.sub .s1 { width: 155px; }
.sub .s2 { width: 208px; color: #000; box-shadow: none; }
.title { height: 37px; display: flex; justify-content: space-between; padding: 4px 8px 0 5px; }
h1 { font: bold 24px/27px "Liberation Sans", sans-serif; color: #aeaeab; }
.help { width: 63px; height: 32px; border: 1px solid #555; background: #dedede; padding: 0 0 1px 5px; display: flex; align-items: center; gap: 2px; font: 13px "DejaVu Sans", sans-serif; letter-spacing: .2px; color: #423535; }
.panel { height: 403px; background: #fff; padding: 2px 2px 0 3px; display: flex; flex-direction: column; }
.grid { display: grid; grid-template-columns: 20px 186px 69px 186px 350px; column-gap: 3px; }
.head { height: 20px; font-weight: bold; }
.head > span { background: linear-gradient(#d3dde4, #9db2c3 13px); line-height: 20px; padding-left: 2px; }
.head .ref { padding: 2px; }
.ref svg { width: 16px; height: 16px; }
em { color: #e22; }
.hosts { margin: -1px 0 1px; }
.host { height: 27px; align-items: center; }
.host > svg { width: 16px; height: 13px; margin-bottom: 2px; }
.host > svg.open { width: 17px; margin-bottom: 0; }
.act { display: flex; gap: 5px; align-items: center; }
.act svg { width: 16px; height: 16px; margin-bottom: 3px; }
.act a { padding-top: 3px; letter-spacing: .04px; }
.act a.new { letter-spacing: .27px; }
.act a + a { margin-left: -1px; }
.inner { padding: 1px 0 0 2px; display: grid; row-gap: 2px; }
.row { display: grid; grid-template-columns: 18px 113px 84px 115px 468px; column-gap: 2px; height: 27px; }
.row > span { padding: 6px 0 0 1px; line-height: 15px; }
.row.top { height: 17px; }
.row.top > span { padding-top: 1px; }
.row:nth-child(odd) > * { background: #efefef; }
.row .path { display: flex; gap: 4px; padding-top: 7px; }
.path svg { width: 16px; height: 16px; margin-top: -3px; }
.ops { display: flex; align-items: center; padding: 9px 0 0 2px; }
.ops svg { margin-top: -6px; }
.i-note { width: 14px; height: 17px; }
.a-edit { width: 31px; margin-left: 6px; }
.i-db { width: 12px; height: 17px; }
.a-del { width: 47px; margin-left: 7px; letter-spacing: .08px; }
.ops .i-rw { width: 20px; height: 22px; margin-top: -12px; }
.a-rw { width: 80px; margin-left: 7px; letter-spacing: .35px; }
.gap { width: 12px; padding-left: 4px; font-weight: bold; }
.gap.wide { width: 13px; }
.i-ex { width: 16px; height: 16px; margin-right: 5px; }
.form { display: flex; padding: 138px 0 0 25px; align-items: flex-start; }
.form input { height: 19px; border: 1px solid #999; border-color: #8d8d8d #b5b5b5 #aaa; background: #fff; font: 11px "Noto Sans", sans-serif; padding: 0 2px; outline: none; margin: 0; border-radius: 0; }
.form .f1, .form .f3 { width: 123px; }
.form .f2 { width: 48px; margin-left: 51px; }
.form .f3 { margin-left: 24px; }
.caret { border: 5px solid transparent; border-top-color: #000; border-bottom: 0; margin: 4px 0 0 5px; }
.form button { margin-left: 51px; width: 38px; height: 19px; border: 1px solid #999; border-radius: 4px; background: linear-gradient(#fff, #ececec); font: 11.500px/16px "Noto Sans", sans-serif; padding: 0; }
footer { height: 20px; border-top: 1px solid #b5b5b8; background: #e9e8ed; text-align: right; padding: 0 6px 0 0; font-size: 10px; letter-spacing: .23px; line-height: 12px; }
.cursor { position: absolute; left: 686px; top: 397px; }
</style>
